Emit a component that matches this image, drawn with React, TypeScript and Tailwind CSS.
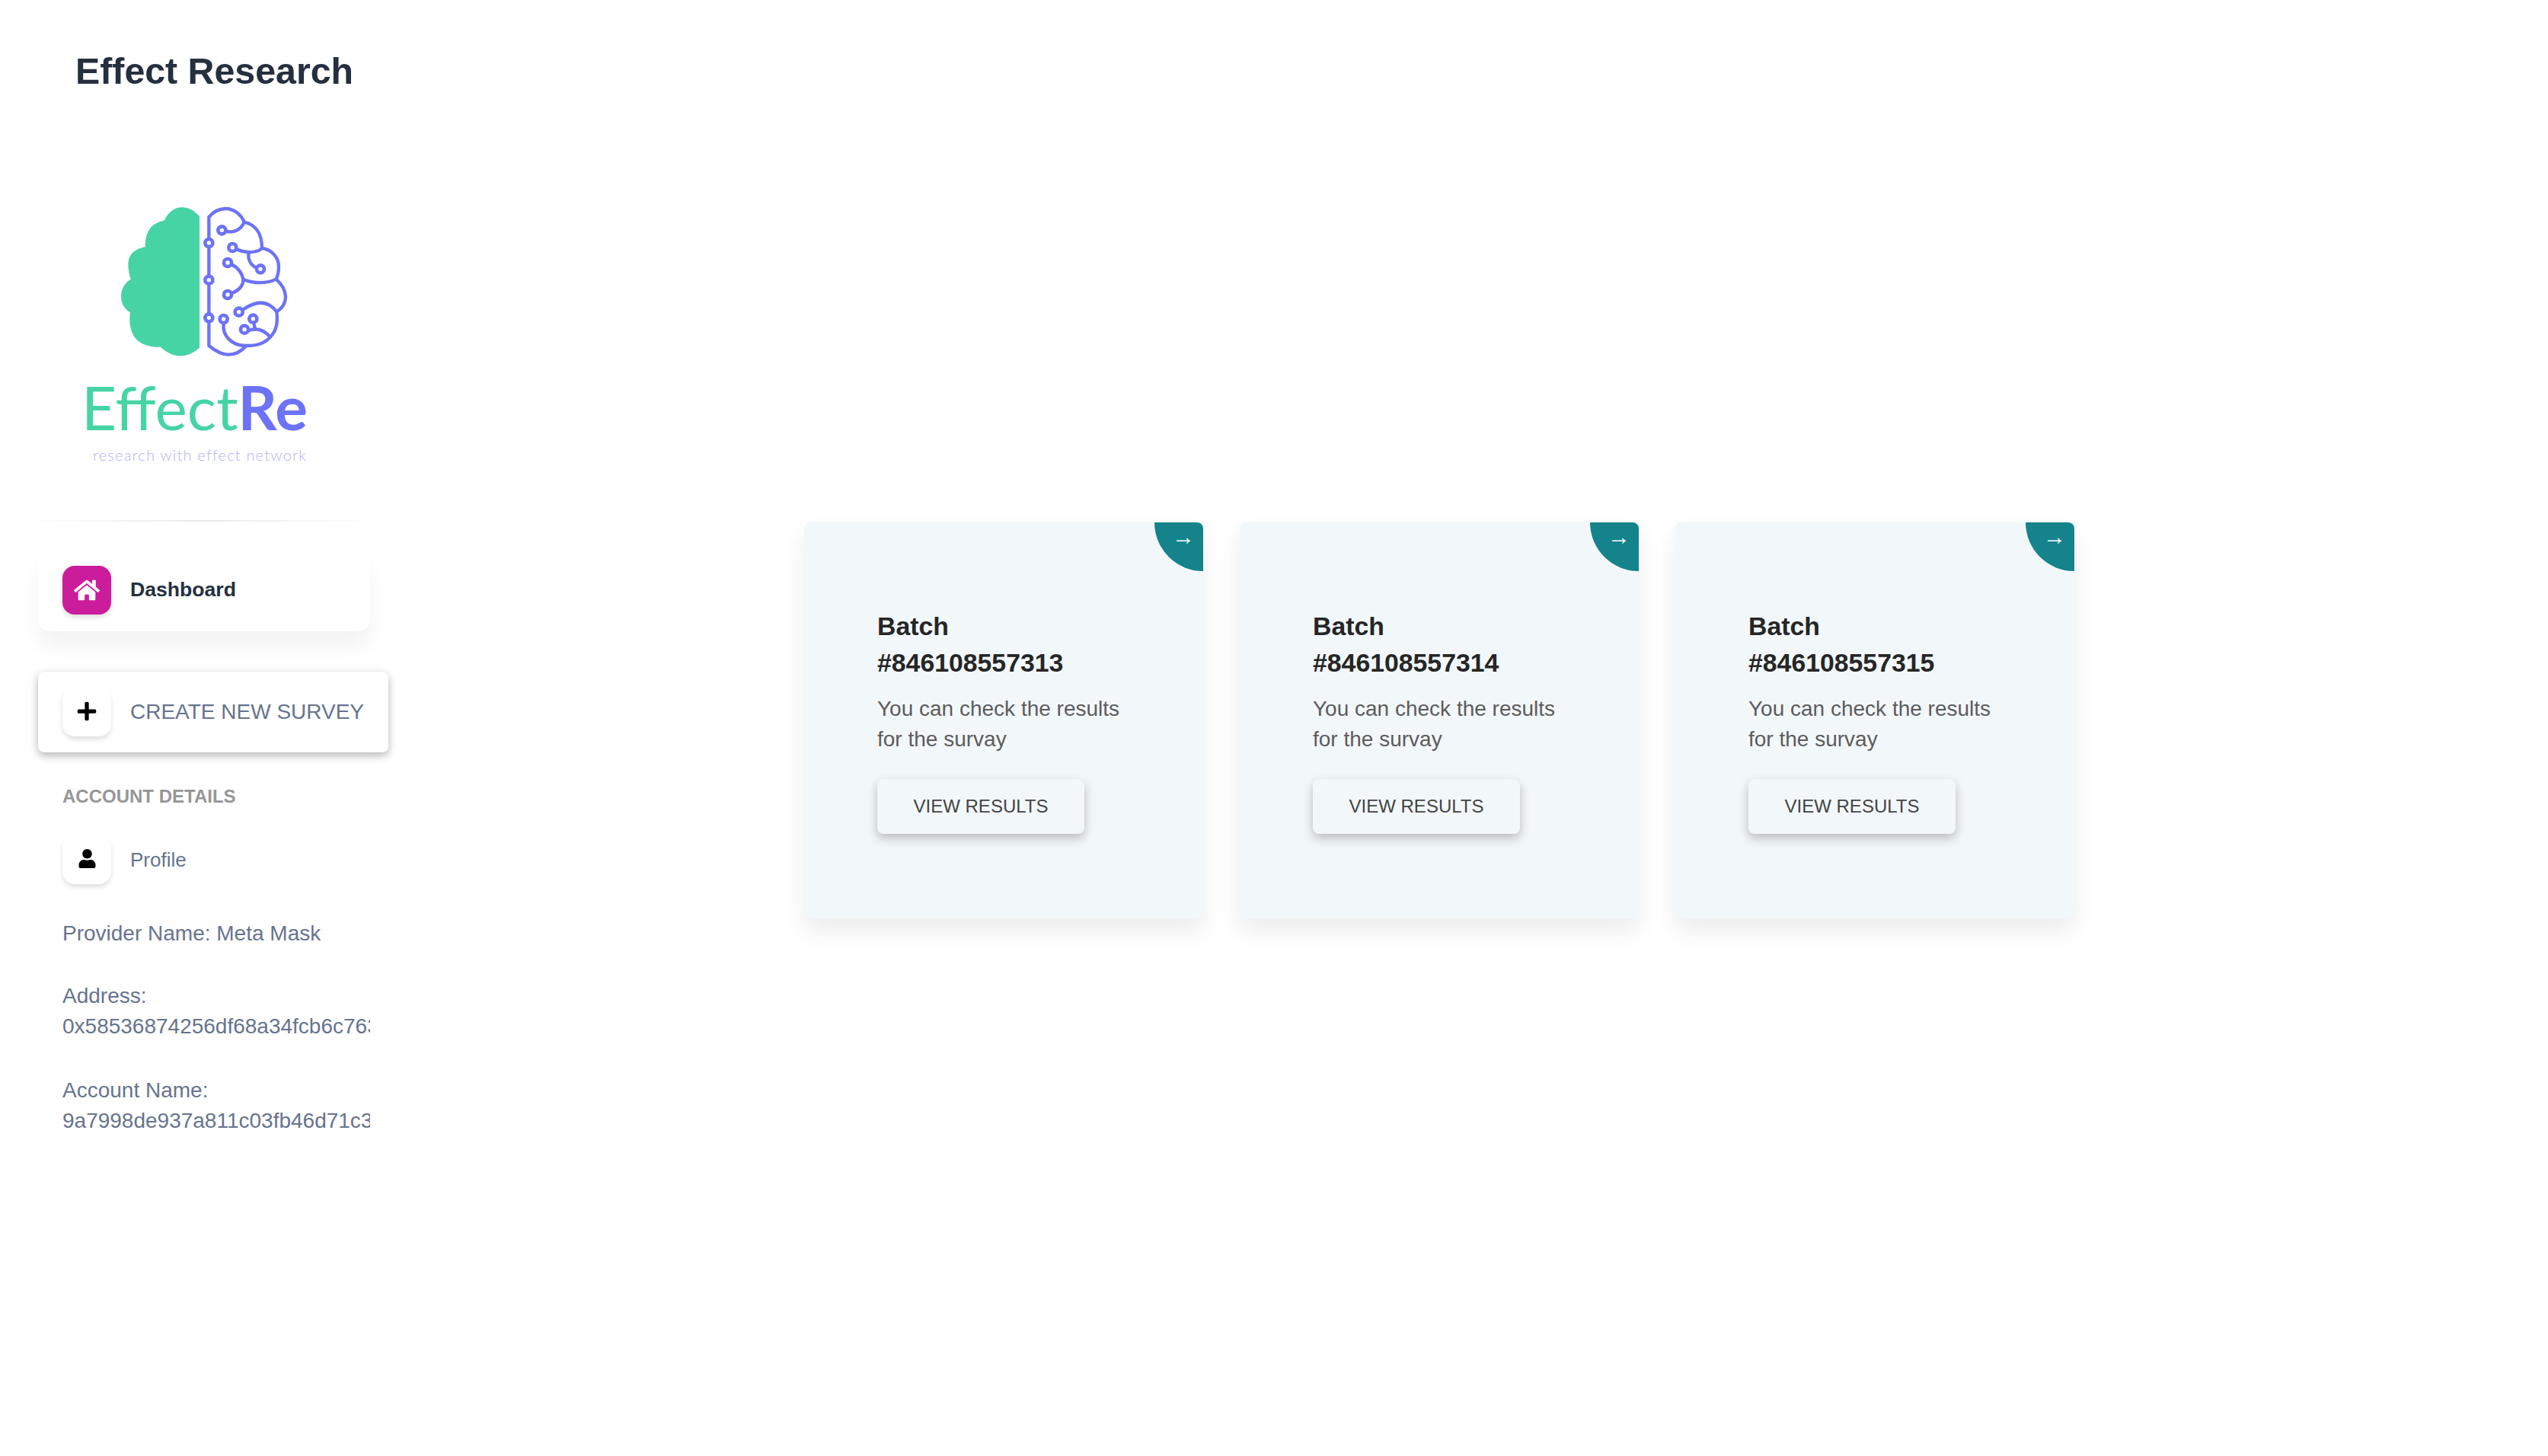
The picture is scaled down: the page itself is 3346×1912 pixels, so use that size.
import {FaHome, FaPlus, FaUser} from "react-icons/fa";

const batches = ["846108557313", "846108557314", "846108557315"]

const BrainLogo = () => {
    return (
        <svg viewBox="0 0 840 690" className="ml-[120px] mt-[66px] block h-[230px] w-[280px]">
            <path
                fill="#47d4a4"
                d="M426 102C405 80 385 67 355 67C325 67 300 90 288 118C245 128 213 150 212 222C170 232 145 250 145 295C145 315 150 335 155 350C130 365 117 390 117 418C117 445 130 468 153 481C148 510 150 560 180 590C205 612 240 618 272 617C295 637 320 652 350 652C380 652 405 638 426 620Z"
            />
            <g fill="none" stroke="#6c73f6" strokeWidth="13" strokeLinecap="round" strokeLinejoin="round">
                <path d="M463 612L463 105C480 85 500 72 530 72C560 72 590 95 602 125C650 135 672 175 672 228C710 232 738 265 738 300C738 320 735 335 728 350C750 370 765 395 765 420C765 445 750 465 730 478C735 520 730 550 705 578C680 605 650 612 610 612C590 635 565 647 540 647C510 647 485 630 463 612" />
                <path d="M530 160C560 170 590 155 602 125" />
                <path d="M572 232C600 245 650 250 672 228" />
                <path d="M650 305C630 295 615 275 620 245" />
                <path d="M552 292C580 305 595 330 598 350C600 375 580 395 553 405" />
                <path d="M598 350C640 368 690 368 728 350" />
                <path d="M597 470C640 440 690 425 730 478" />
                <path d="M521 525C515 570 550 612 610 612" />
                <path d="M640 522L645 548" />
                <path d="M620 552C650 540 680 550 705 578" />
            </g>
            <g fill="#fff" stroke="#6c73f6" strokeWidth="14">
                <circle cx="463" cy="207" r="15" />
                <circle cx="463" cy="353" r="15" />
                <circle cx="463" cy="502" r="15" />
                <circle cx="514" cy="157" r="15" />
                <circle cx="556" cy="225" r="15" />
                <circle cx="666" cy="310" r="15" />
                <circle cx="537" cy="285" r="15" />
                <circle cx="537" cy="411" r="15" />
                <circle cx="581" cy="479" r="15" />
                <circle cx="521" cy="507" r="15" />
                <circle cx="637" cy="506" r="15" />
                <circle cx="603" cy="548" r="15" />
            </g>
        </svg>
    )
}

const BatchCard = ({id}: {id: string}) => {
    return (
        <div className="relative h-[520px] w-[524px] overflow-hidden rounded-lg bg-[#f2f7fa] pl-[96px] pt-[112px] shadow-[0_16px_32px_rgba(0,0,0,0.08)]">
            <div className="absolute right-0 top-0 flex h-16 w-16 items-start justify-end rounded-bl-full bg-[#14838c] pr-[11px] pt-[3px] text-[30px] leading-[32px] text-white">→</div>
            <h3 className="w-[320px] text-[33.8px] font-bold leading-[48px] text-[#262626]">Batch #{id}</h3>
            <p className="mt-[17px] w-[340px] text-[28px] leading-[40px] text-[#5c5c5c]">You can check the results for the survay</p>
            <button className="mt-[32px] h-[72px] w-[272px] rounded-lg bg-[#f2f7fa] text-[24px] text-[#444] shadow-[0_6px_14px_rgba(0,0,0,0.24)]">VIEW RESULTS</button>
        </div>
    )
}

const App = () => {
    return (
        <div className="flex min-h-screen bg-white font-['Liberation_Sans',Arial,sans-serif]">
            <aside className="w-[540px] shrink-0 overflow-hidden">
                <div className="flex h-[186px] items-center pl-[99px] text-[48.3px] font-bold text-[#252f40]">Effect Research</div>
                <div className="-mt-[2px]"><BrainLogo/></div>
                <div className="ml-[107px] mt-[14px] font-['Lato',sans-serif] text-[80px] font-normal leading-[80px] text-[#47d4a4]">
                    Effect<span className="font-bold text-[#6c73f6]">Re</span>
                </div>
                <div className="ml-[122px] mt-[8px] whitespace-nowrap font-['Lato',sans-serif] text-[20px] font-light leading-[30px] tracking-[1.2px] text-[#b3aff9]">research with effect network</div>
                <div className="ml-[30px] mt-[71px] h-[2px] w-[470px] bg-gradient-to-r from-transparent via-[#e9e9e9] to-transparent"></div>

                <div className="ml-[50px] mt-[36px] flex h-[108px] w-[436px] items-center rounded-2xl bg-white pl-[32px] shadow-[0_20px_27px_rgba(0,0,0,0.05)]">
                    <div className="flex h-16 w-16 items-center justify-center rounded-2xl bg-[#cb1c9c] shadow-[0_4px_6px_rgba(0,0,0,0.12)]">
                        <FaHome className="text-[34px] text-white"/>
                    </div>
                    <span className="ml-[25px] text-[26.6px] font-bold text-[#252f40]">Dashboard</span>
                </div>

                <div className="ml-[50px] mt-[53px] flex h-[106px] w-[460px] items-center rounded-lg bg-white pl-[32px] shadow-[0_4px_12px_rgba(0,0,0,0.3)]">
                    <div className="flex h-16 w-16 items-center justify-center rounded-2xl bg-white shadow-[0_4px_6px_rgba(0,0,0,0.12)]">
                        <FaPlus className="-mt-[3px] text-[28px] text-black"/>
                    </div>
                    <span className="ml-[25px] text-[28px] text-[#67748e]">CREATE NEW SURVEY</span>
                </div>

                <div className="ml-[82px] mt-[42px] text-[24px] font-bold leading-[32px] text-[#969696]">ACCOUNT DETAILS</div>

                <div className="ml-[82px] mt-[35px] flex items-center">
                    <div className="flex h-16 w-16 items-center justify-center rounded-2xl bg-white shadow-[0_4px_6px_rgba(0,0,0,0.12)]">
                        <FaUser className="-mt-[3px] text-[25px] text-black"/>
                    </div>
                    <span className="ml-[25px] text-[26px] text-[#67748e]">Profile</span>
                </div>

                <div className="ml-[82px] w-[404px] overflow-hidden text-[28px] leading-[40px] text-[#67748e]">
                    <p className="mt-[45px]">Provider Name: Meta Mask</p>
                    <p className="mt-[42px]">Address:</p>
                    <p className="whitespace-nowrap">0x58536874256df68a34fcb6c763a92e41</p>
                    <p className="mt-[44px]">Account Name:</p>
                    <p className="whitespace-nowrap">9a7998de937a811c03fb46d71c3e8f20</p>
                </div>
            </aside>
            <main className="flex flex-1 items-start gap-12 pl-[516px] pt-[686px]">
                {batches.map(id => <BatchCard key={id} id={id}/>)}
            </main>
        </div>
    )
}

export default App
